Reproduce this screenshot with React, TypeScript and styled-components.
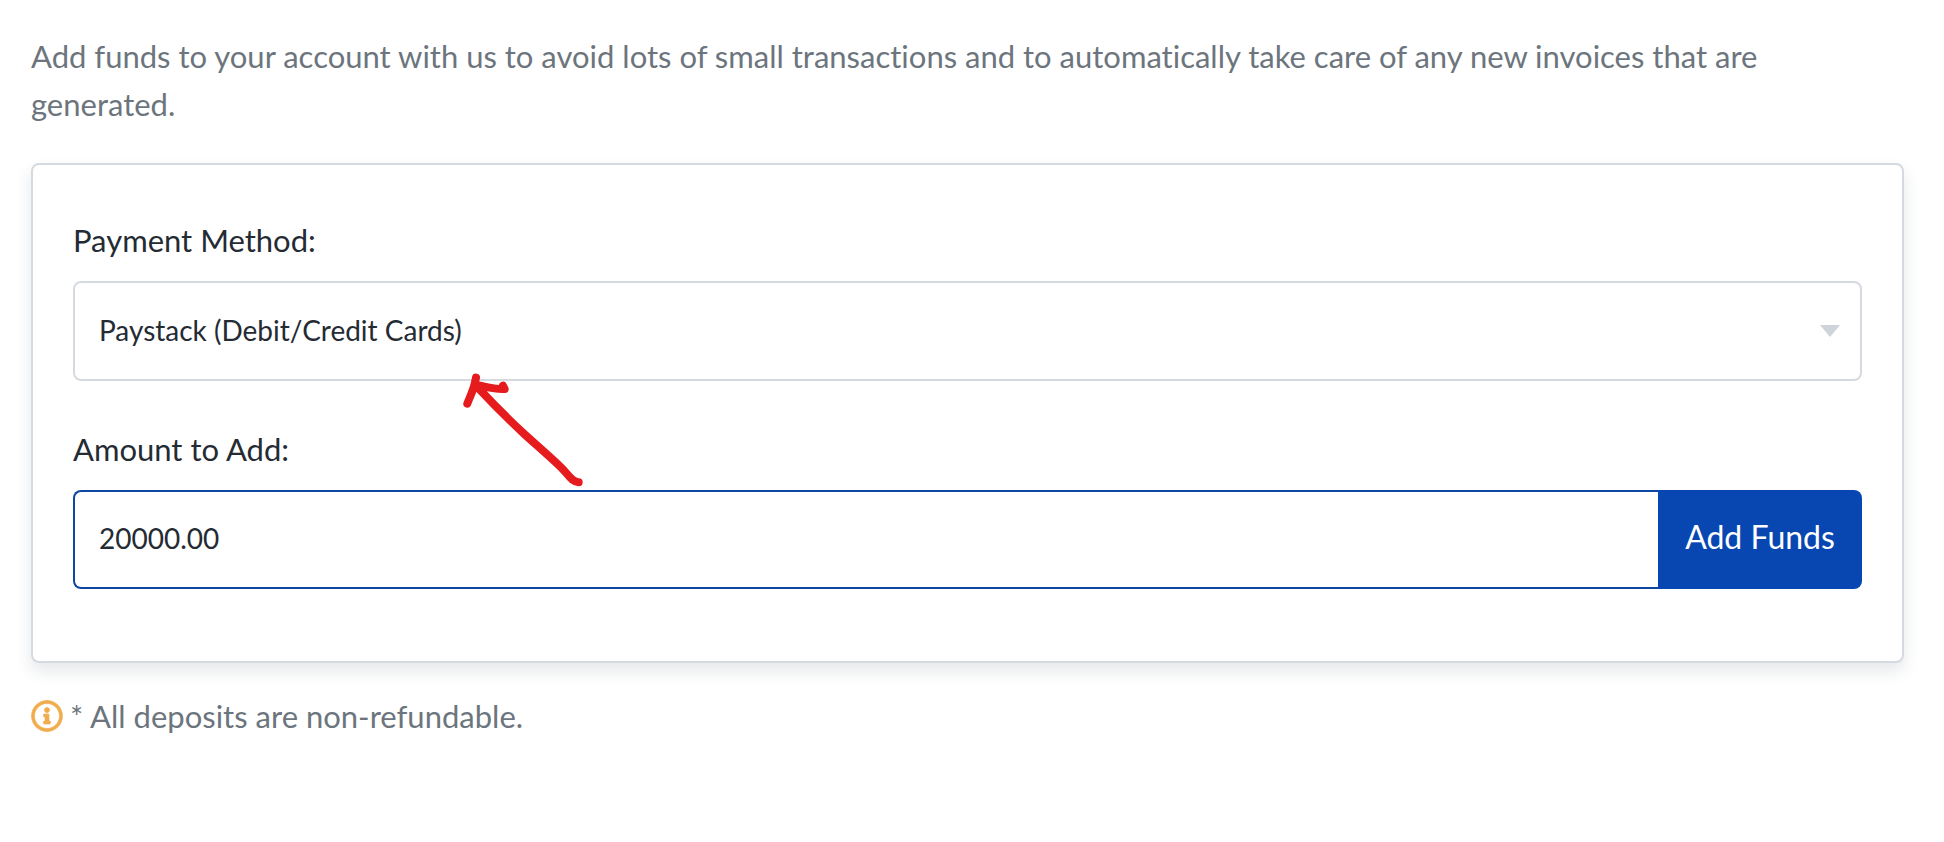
import React, { useState } from "react";
import styled, { createGlobalStyle } from "styled-components";

const GlobalStyle = createGlobalStyle`
  *, *::before, *::after { box-sizing: border-box; }
  body {
    margin: 0;
    background: #fff;
    color: #252b33;
    font-family: Lato, "Open Sans", sans-serif;
    font-size: 31px;
    line-height: 48px;
    font-variant-ligatures: none;
  }
`;

const Page = styled.main`
  padding: 32px 40px 32px 31px;
`;

const Note = styled.p`
  display: flex;
  align-items: center;
  gap: 7px;
  margin: 0;
  color: #6c757d;
`;

const Intro = styled.p`
  margin: 0 0 35px;
  color: #6c757d;
`;

const Card = styled.form`
  display: flex;
  flex-direction: column;
  gap: 44px;
  margin-bottom: 29px;
  padding: 51px 40px 72px;
  background: #fff;
  border: 2px solid #d5dae1;
  border-radius: 8px;
  box-shadow: 0 8px 16px rgba(37, 55, 70, 0.12);
`;

const Field = styled.div`
  position: relative;
  display: flex;
  flex-direction: column;
  gap: 17px;
`;

const Label = styled.label`
  align-self: flex-start;
`;

const SelectBox = styled.div`
  display: grid;
  align-items: center;
  > * { grid-area: 1 / 1; }
`;

const Select = styled.select`
  appearance: none;
  width: 100%;
  height: 100px;
  padding: 0 64px 2px 24px;
  border: 2px solid #d5dae1;
  border-radius: 8px;
  background: transparent;
  color: inherit;
  font: inherit;
  font-size: 28px;
  outline: none;
`;

const Caret = styled.svg`
  justify-self: end;
  margin-right: 22px;
  pointer-events: none;
`;

const InputGroup = styled.div`
  display: flex;
  height: 99px;
`;

const Input = styled.input`
  flex: 1;
  min-width: 0;
  padding: 0 24px 4px;
  border: 2px solid #0d47a1;
  border-right: 0;
  border-radius: 8px 0 0 8px;
  background: transparent;
  color: inherit;
  font: inherit;
  font-size: 28px;
  outline: none;
`;

const Button = styled.button`
  flex: 0 0 204px;
  padding: 0 0 6px;
  border: 0;
  border-radius: 0 8px 8px 0;
  background: #0847b1;
  color: #fff;
  font: inherit;
  font-size: 32px;
  white-space: nowrap;
  cursor: pointer;
`;

const PointerArrow = styled.svg`
  position: absolute;
  left: 387px;
  top: 151px;
  z-index: 1;
  pointer-events: none;
`;

function InfoIcon() {
  return (
    <svg width="32" height="32" viewBox="0 0 512 512" fill="#f0ad4e" stroke="#f0ad4e" strokeWidth="10" aria-hidden="true">
      <path d="M256 8C119.043 8 8 119.083 8 256c0 136.997 111.043 248 248 248s248-111.003 248-248C504 119.083 392.957 8 256 8zm0 448c-110.532 0-200-89.431-200-200 0-110.495 89.472-200 200-200 110.491 0 200 89.471 200 200 0 110.53-89.431 200-200 200zm0-338c23.196 0 42 18.804 42 42s-18.804 42-42 42-42-18.804-42-42 18.804-42 42-42zm56 254c0 6.627-5.373 12-12 12h-88c-6.627 0-12-5.373-12-12v-24c0-6.627 5.373-12 12-12h12v-64h-12c-6.627 0-12-5.373-12-12v-24c0-6.627 5.373-12 12-12h64c6.627 0 12 5.373 12 12v100h12c6.627 0 12 5.373 12 12v24z" />
    </svg>
  );
}

export default function App() {
  const [amount, setAmount] = useState("20000.00");
  return (
    <>
      <GlobalStyle />
      <Page>
        <Intro>
          Add funds to your account with us to avoid lots of small transactions and to
          automatically take care of any new invoices that are generated.
        </Intro>
        <Card onSubmit={(e) => e.preventDefault()}>
          <Field>
            <Label htmlFor="method">Payment Method:</Label>
            <SelectBox>
              <Select id="method">
                <option>Paystack (Debit/Credit Cards)</option>
              </Select>
              <Caret width="20" height="12" viewBox="0 0 20 12" aria-hidden="true">
                <path d="M0 0H20L10 12Z" fill="#ced4da" />
              </Caret>
            </SelectBox>
            <PointerArrow
              width="130"
              height="130"
              viewBox="0 0 390 390"
              fill="none"
              stroke="#e61b1e"
              strokeLinecap="round"
              strokeLinejoin="round"
              aria-hidden="true"
            >
              <path
                strokeWidth="24"
                d="M22 110C30 88 38 74 42 58C45 47 46 41 48 32M46 54C70 56 96 68 134 66L129 56M52 60C100 112 140 152 196 204C236 240 266 266 300 298C324 320 334 345 356 346"
              />
            </PointerArrow>
          </Field>
          <Field>
            <Label htmlFor="amount">Amount to Add:</Label>
            <InputGroup>
              <Input id="amount" value={amount} onChange={(e) => setAmount(e.target.value)} />
              <Button type="submit">Add Funds</Button>
            </InputGroup>
          </Field>
        </Card>
        <Note>
          <InfoIcon />
          <span>* All deposits are non-refundable.</span>
        </Note>
      </Page>
    </>
  );
}
